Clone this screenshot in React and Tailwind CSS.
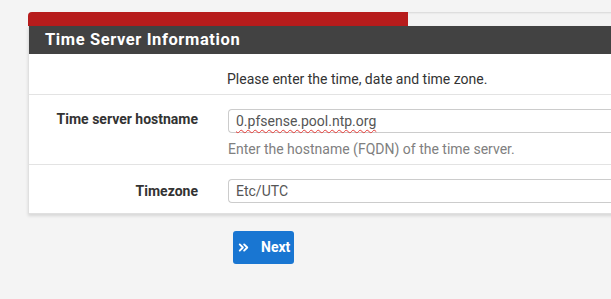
import { ChevronsRight } from "lucide-react";

const Row = ({ label, children, className = "" }) => (
    <div className={`flex border-t border-[#e3e3e3] ${className}`}>
        <div className="w-[169px] shrink-0 text-right font-bold text-[14px] text-[#333] leading-[20px]">
            {label}
        </div>
        <div className="ml-[30px] flex-1">{children}</div>
    </div>
);

const App = () => {
    return (
        <div
            className="h-screen overflow-hidden bg-[#f4f4f4] pl-[28px] pt-[12px]"
            style={{ fontFamily: "Roboto, 'Liberation Sans', sans-serif" }}
        >
            <div className="w-[700px]">
                <div className="h-[14px] bg-[#f3f3f3] rounded-t-[4px] shadow-[inset_0_1px_2px_rgba(0,0,0,0.12)]">
                    <div className="h-full w-[380px] bg-[#b71c1c] rounded-tl-[4px]" />
                </div>

                <div className="bg-white border-x border-b border-[#e0e0e0] shadow-[0_2px_3px_rgba(0,0,0,0.12)]">
                    <div className="h-[28px] bg-[#424242] px-[16px] flex items-center text-white font-bold text-[16.5px] tracking-[0.6px]">
                        Time Server Information
                    </div>

                    <div className="h-[40px] pt-[15px] pl-[198px] text-[14px] leading-[20px] text-[#333]">
                        Please enter the time, date and time zone.
                    </div>

                    <Row label="Time server hostname" className="pt-[14px] pb-[5px]">
                        <div className="h-[24px] border border-[#ccc] rounded-l-[4px] border-r-0 flex items-center pl-[7px] text-[14px] text-[#555]">
                            <span className="underline decoration-wavy decoration-[#e53935] decoration-1 underline-offset-[3px]">
                                0.pfsense.pool.ntp.org
                            </span>
                        </div>
                        <div className="mt-[6px] text-[14px] leading-[20px] text-[#808080]">
                            Enter the hostname (FQDN) of the time server.
                        </div>
                    </Row>

                    <Row label="Timezone" className="pt-[14px] pb-[10px] items-center">
                        <div className="h-[24px] border border-[#ccc] rounded-l-[4px] border-r-0 flex items-center pl-[7px] text-[14px] text-[#555]">
                            Etc/UTC
                        </div>
                    </Row>
                </div>

                <div className="mt-[17px] ml-[205px]">
                    <button className="h-[33px] w-[61px] bg-[#1976d2] rounded-[3px] text-white flex items-center pl-[3px] gap-[10px] text-[14px] font-bold">
                        <ChevronsRight size={15} strokeWidth={3} />
                        <span>Next</span>
                    </button>
                </div>
            </div>
        </div>
    );
};

export default App;
